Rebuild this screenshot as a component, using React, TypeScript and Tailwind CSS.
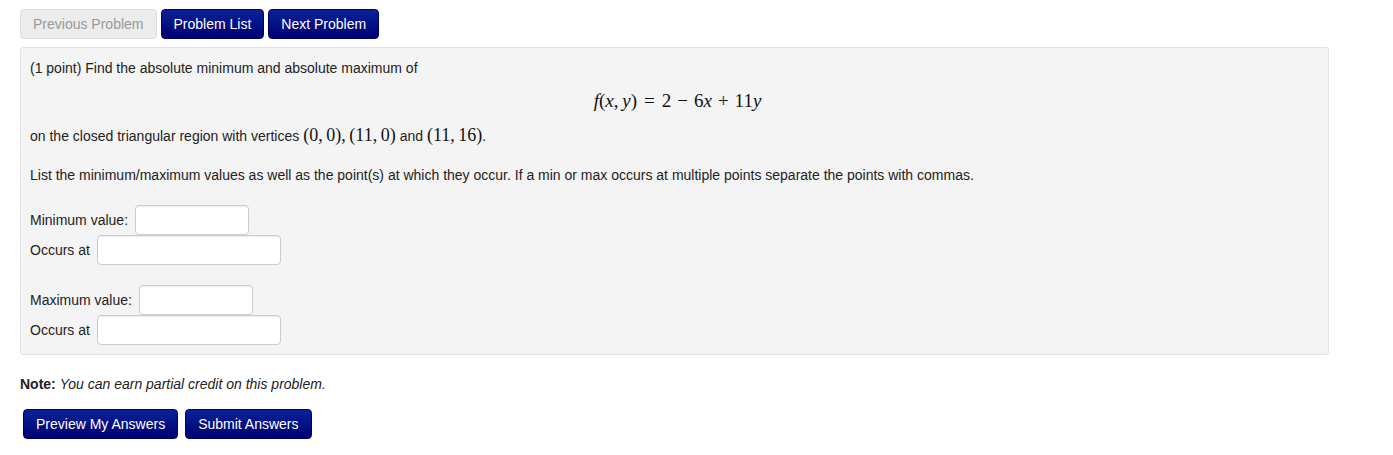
const navBtn =
  "h-[30px] rounded-[4px] border border-[#000060] bg-linear-to-b from-[#0b2199] to-[#000070] px-[12px] text-[14px] text-white";

const field =
  "h-[30px] rounded-[4px] border border-[#cccccc] bg-white shadow-[inset_0_1px_1px_rgba(0,0,0,0.075)]";

function M({ children, big }: { children: React.ReactNode; big?: boolean }) {
  return (
    <span
      className={`font-['Liberation_Serif','DejaVu_Serif',serif] text-[#111] ${
        big ? "text-[19px]" : "text-[18px]"
      }`}
    >
      {children}
    </span>
  );
}

function I({ children }: { children: React.ReactNode }) {
  return <i>{children}</i>;
}

export default function App() {
  return (
    <div className="min-h-[455px] bg-white font-['Liberation_Sans',Arial,sans-serif] text-[14px] text-[#222]">
      <div className="flex gap-[4px] pl-[20px] pt-[9px]">
        <button
          type="button"
          className="h-[30px] rounded-[4px] border border-[#dcdcdc] bg-[#ececec] px-[12px] text-[14px] text-[#999]"
        >
          Previous Problem
        </button>
        <button type="button" className={navBtn}>
          Problem List
        </button>
        <button type="button" className={navBtn}>
          Next Problem
        </button>
      </div>

      <div className="mx-[20px] mt-[8px] w-[1309px] rounded-[3px] border border-[#e3e3e3] bg-[#f4f4f4] px-[9px] pb-[9px] pt-[10px]">
        <p className="leading-[20px]">
          (1 point) Find the absolute minimum and absolute maximum of
        </p>
        <div className="mt-[13px] pl-[6px] text-center leading-[20px]">
          <M big>
            <I>f</I>(<I>x</I>,&thinsp;<I>y</I>)<span className="mx-[7px]">=</span>2
            <span className="mx-[6px]">−</span>6<I>x</I>
            <span className="mx-[6px]">+</span>11<I>y</I>
          </M>
        </div>
        <p className="mt-[12px] leading-[22px]">
          on the closed triangular region with vertices{" "}
          <M>(0,&thinsp;0),&thinsp;(11,&thinsp;0)</M> and <M>(11,&thinsp;16)</M>.
        </p>
        <p className="mt-[18px] leading-[20px]">
          List the minimum/maximum values as well as the point(s) at which they
          occur. If a min or max occurs at multiple points separate the points with
          commas.
        </p>

        <div className="mt-[20px] flex flex-col">
          <label className="flex items-center gap-[7px]">
            Minimum value:
            <input className={`${field} w-[114px]`} />
          </label>
          <label className="flex items-center gap-[7px]">
            Occurs at
            <input className={`${field} w-[184px]`} />
          </label>
        </div>

        <div className="mt-[20px] flex flex-col">
          <label className="flex items-center gap-[7px]">
            Maximum value:
            <input className={`${field} w-[114px]`} />
          </label>
          <label className="flex items-center gap-[7px]">
            Occurs at
            <input className={`${field} w-[184px]`} />
          </label>
        </div>
      </div>

      <p className="ml-[20px] mt-[19px] leading-[20px]">
        <b>Note:</b> <i>You can earn partial credit on this problem.</i>
      </p>

      <div className="ml-[23px] mt-[15px] flex gap-[7px]">
        <button type="button" className={navBtn}>
          Preview My Answers
        </button>
        <button type="button" className={navBtn}>
          Submit Answers
        </button>
      </div>
    </div>
  );
}
